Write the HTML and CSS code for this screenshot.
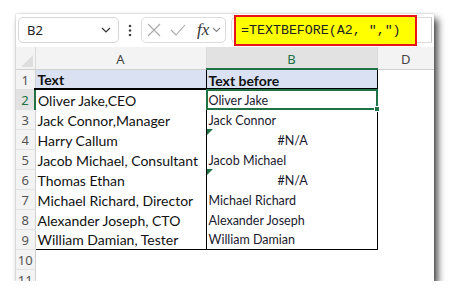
FILE: index.html
```html
<!DOCTYPE html>
<html lang="en">

<head>
    <meta charset="UTF-8">
    <meta name="viewport" content="width=device-width, initial-scale=1.0">
    <title>TEXTBEFORE</title>
    <link rel="stylesheet" href="styles.css">
</head>

<body>
    <div class="page">
        <div class="window">
            <div class="toolbar">
                <div class="namebox">
                    <span>B2</span>
                    <svg width="10" height="6" viewBox="0 0 10 6"><path d="M1 1L5 5L9 1" stroke="#333" stroke-width="1.2" fill="none"/></svg>
                </div>
                <div class="dots">
                    <svg width="4" height="13" viewBox="0 0 4 13"><circle cx="2" cy="2" r="1.3" fill="#444"/><circle cx="2" cy="6.5" r="1.3" fill="#444"/><circle cx="2" cy="11" r="1.3" fill="#444"/></svg>
                </div>
                <div class="fxbox">
                    <svg width="14" height="14" viewBox="0 0 14 14"><path d="M1 1L13 13M13 1L1 13" stroke="#a8a8a8" stroke-width="1.1" fill="none"/></svg>
                    <svg width="16" height="12" viewBox="0 0 16 12"><path d="M1 6L6 11L15 1" stroke="#a8a8a8" stroke-width="1.1" fill="none"/></svg>
                    <span class="fx">fx</span>
                    <svg width="9" height="6" viewBox="0 0 9 6"><path d="M1 1L4.5 4.5L8 1" stroke="#888" stroke-width="1.1" fill="none"/></svg>
                </div>
                <div class="formula-wrap">
                    <div class="formula">=TEXTBEFORE(A2, ",")</div>
                </div>
            </div>

            <table class="sheet">
                <colgroup>
                    <col class="c-head">
                    <col class="c-a">
                    <col class="c-b">
                    <col class="c-d">
                </colgroup>
                <tr class="col-heads">
                    <th class="corner"><span class="tri"></span></th>
                    <th>A</th>
                    <th class="active">B</th>
                    <th class="last">D</th>
                </tr>
                <tr>
                    <td class="rh">1</td>
                    <td class="a hdr">Text</td>
                    <td class="b hdr">Text before</td>
                    <td></td>
                </tr>
                <tr>
                    <td class="rh active">2</td>
                    <td class="a">Oliver Jake,CEO</td>
                    <td class="b res selected">Oliver Jake<span class="handle"></span></td>
                    <td></td>
                </tr>
                <tr>
                    <td class="rh">3</td>
                    <td class="a">Jack Connor,Manager</td>
                    <td class="b res">Jack Connor</td>
                    <td></td>
                </tr>
                <tr>
                    <td class="rh">4</td>
                    <td class="a">Harry Callum</td>
                    <td class="b res err">#N/A</td>
                    <td></td>
                </tr>
                <tr>
                    <td class="rh">5</td>
                    <td class="a">Jacob Michael, Consultant</td>
                    <td class="b res">Jacob Michael</td>
                    <td></td>
                </tr>
                <tr>
                    <td class="rh">6</td>
                    <td class="a">Thomas Ethan</td>
                    <td class="b res err">#N/A</td>
                    <td></td>
                </tr>
                <tr>
                    <td class="rh">7</td>
                    <td class="a">Michael Richard, Director</td>
                    <td class="b res">Michael Richard</td>
                    <td></td>
                </tr>
                <tr>
                    <td class="rh">8</td>
                    <td class="a">Alexander Joseph, CTO</td>
                    <td class="b res">Alexander Joseph</td>
                    <td></td>
                </tr>
                <tr class="end">
                    <td class="rh">9</td>
                    <td class="a">William Damian, Tester</td>
                    <td class="b res">William Damian</td>
                    <td></td>
                </tr>
                <tr>
                    <td class="rh">10</td>
                    <td></td>
                    <td></td>
                    <td></td>
                </tr>
                <tr>
                    <td class="rh">11</td>
                    <td></td>
                    <td></td>
                    <td></td>
                </tr>
            </table>
        </div>
    </div>
</body>

</html>
```

FILE: styles.css
```css
* {
    box-sizing: border-box;
    margin: 0;
    padding: 0;
}

body {
    font-family: "Noto Sans", Arial, sans-serif;
    background-color: #fff;
}

.page {
    padding: 14px 0 0 16px;
}

.window {
    width: 418px;
    height: 267px;
    background-color: #fff;
    overflow: hidden;
    box-shadow: 4px 5px 7px rgba(0, 0, 0, 0.7), 0 0 2px rgba(0, 0, 0, 0.25);
}

/* formula bar */
.toolbar {
    height: 32px;
    display: flex;
    align-items: center;
    padding-left: 2px;
}

.namebox {
    width: 101px;
    height: 26px;
    border: 1px solid #d6d6d6;
    border-radius: 5px;
    display: flex;
    align-items: center;
    justify-content: space-between;
    padding: 0 7px 0 8px;
    font-size: 13px;
    color: #222;
}

.dots {
    width: 22px;
    display: flex;
    justify-content: center;
}

.fxbox {
    width: 85px;
    height: 26px;
    border: 1px solid #dcdcdc;
    border-radius: 5px;
    display: flex;
    align-items: center;
    gap: 9px;
    padding-left: 5px;
    margin-right: 5px;
}

.fxbox .fx {
    font-family: "Liberation Serif", serif;
    font-style: italic;
    font-size: 17px;
    color: #333;
    margin-left: 2px;
    margin-right: -6px;
}

.formula-wrap {
    flex: 1;
    height: 26px;
    margin-right: 2px;
    border: 1px solid #dcdcdc;
    border-right-color: #c8c8c8;
    border-radius: 5px 0 0 5px;
    display: flex;
    align-items: center;
}

.formula {
    width: 183px;
    height: 31px;
    margin-left: 2px;
    background-color: #ffff00;
    border: 2px solid #e8141a;
    font-family: "Liberation Mono", monospace;
    font-size: 13.3px;
    color: #222;
    display: flex;
    align-items: center;
    padding-left: 5px;
}

/* grid */
.sheet {
    margin-top: 1px;
    border-collapse: collapse;
    table-layout: fixed;
    width: 418px;
}

.c-head { width: 19px; }
.c-a { width: 171px; }
.c-b { width: 171px; }

.col-heads th {
    height: 22px;
    line-height: 16px;
    background-color: #f3f3f3;
    border-right: 1px solid #dadada;
    border-bottom: 1px solid #d0d0d0;
    font-weight: normal;
    font-size: 13px;
    color: #444;
    padding-top: 2px;
}

.col-heads th.active {
    background-color: #e2e2e2;
    color: #217346;
    border-bottom: 2px solid #217346;
}

.col-heads th.last {
    border-right: none;
}

.corner {
    position: relative;
}

.corner .tri {
    position: absolute;
    right: 2px;
    bottom: 2px;
    width: 0;
    height: 0;
    border-left: 12px solid transparent;
    border-bottom: 12px solid #dedede;
}

td {
    height: 20px;
    line-height: 15px;
    padding-top: 2px;
    white-space: nowrap;
    overflow: hidden;
    color: #111;
}

.rh {
    background-color: #f3f3f3;
    border-right: 1px solid #d0d0d0;
    border-bottom: 1px solid #e2e2e2;
    font-size: 13px;
    color: #555;
    text-align: center;
}

.rh.active {
    background-color: #e2e2e2;
    color: #217346;
    border-right: 2px solid #217346;
}

.a,
.b {
    border-left: 1px solid #000;
    padding-left: 2px;
    font-family: Lato, "Noto Sans", sans-serif;
    font-size: 14px;
}

.b {
    border-right: 1px solid #000;
}

.hdr {
    background-color: #d9e1f2;
    font-weight: bold;
    border-top: 1px solid #000;
    border-bottom: 2px solid #000;
}

.res {
    font-size: 12.5px;
    color: #1a1a2e;
    position: relative;
}

.err {
    text-align: center;
}

.err::before {
    content: "";
    position: absolute;
    left: 0;
    top: 0;
    border-top: 6px solid #217346;
    border-right: 6px solid transparent;
}

.selected {
    overflow: visible;
}

.selected::after {
    content: "";
    position: absolute;
    left: -1px;
    top: -1px;
    right: -1px;
    bottom: -1px;
    border: 2px solid #217346;
}

.handle {
    position: absolute;
    right: -3px;
    bottom: -3px;
    width: 6px;
    height: 6px;
    background-color: #217346;
    border: 1px solid #fff;
    z-index: 2;
}

.end .a,
.end .b {
    border-bottom: 1px solid #000;
}
```
